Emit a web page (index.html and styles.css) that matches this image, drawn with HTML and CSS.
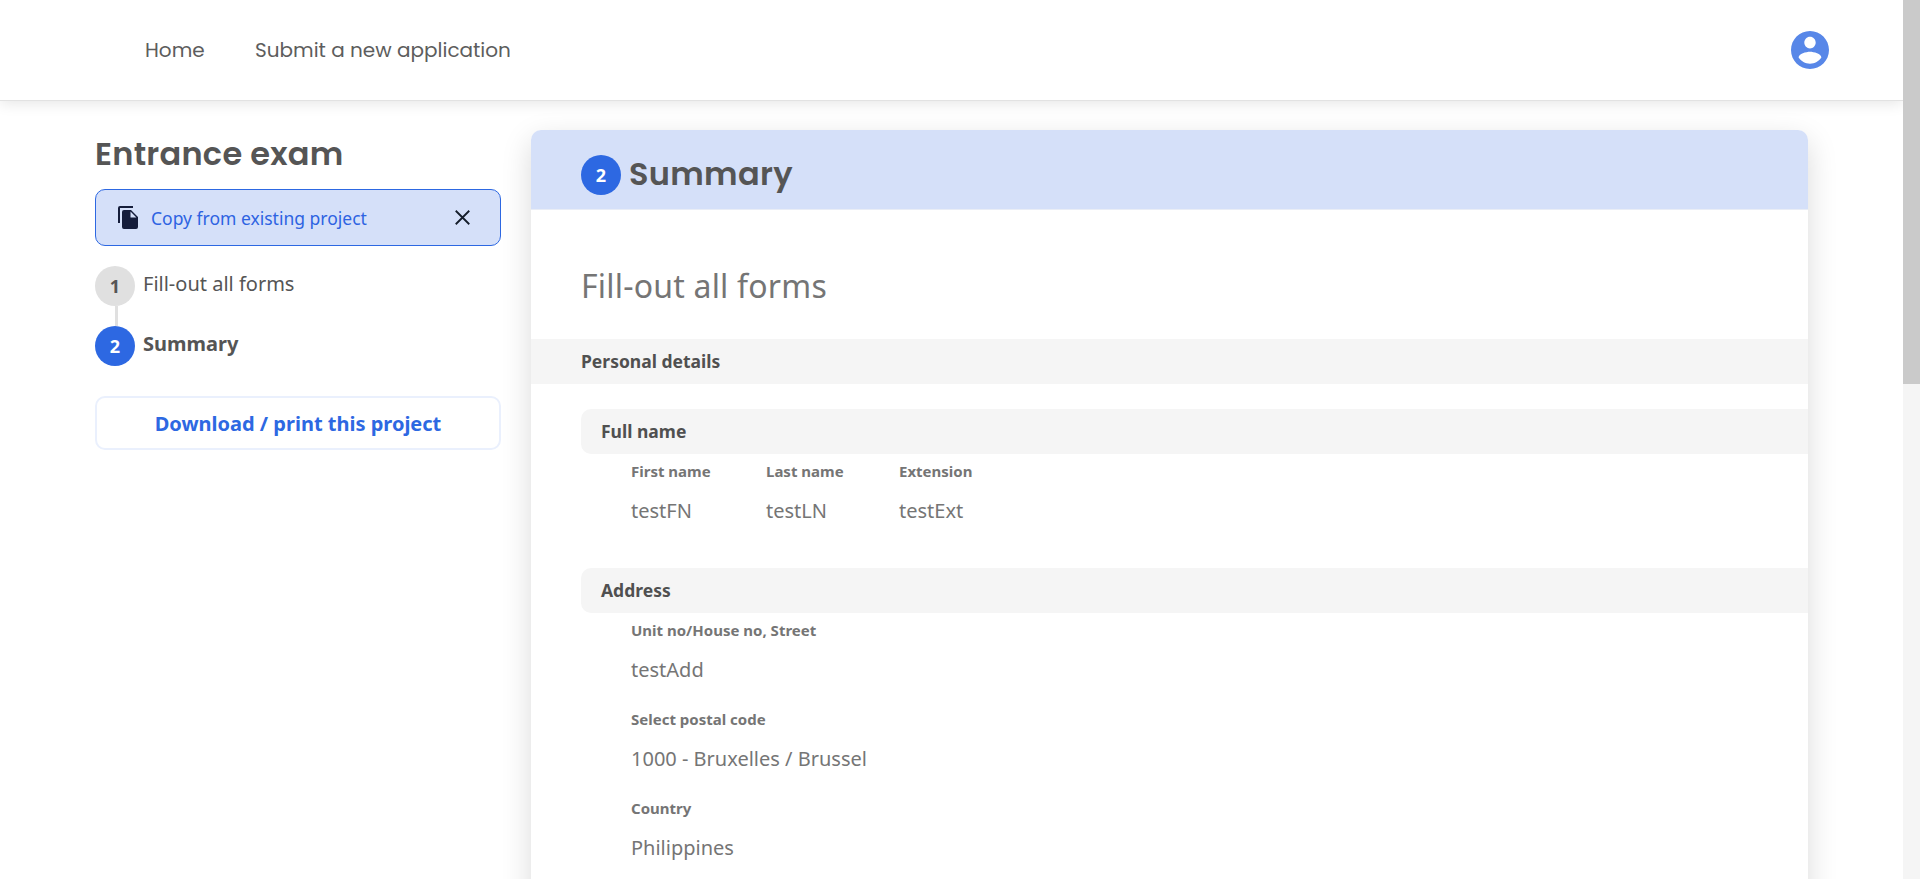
FILE: index.html
```html
<!DOCTYPE html>
<html lang="en">
<head>
<meta charset="utf-8">
<title>Entrance exam</title>
<link rel="stylesheet" href="styles.css">
</head>
<body>
<div class="window">
  <div class="page">
    <header class="topbar">
      <nav class="nav">
        <a class="nav-home">Home</a>
        <a class="nav-submit">Submit a new application</a>
      </nav>
      <svg class="avatar" viewBox="2 2 20 20"><path fill="#5887e8" fill-rule="evenodd" d="M12 2C6.48 2 2 6.48 2 12s4.480 10 10 10 10-4.480 10-10S17.520 2 12 2zm0 3c1.660 0 3 1.340 3 3.100s-1.340 3.100-3 3.100-3-1.440-3-3.100S10.340 5 12 5zm0 14.200c-2.500 0-4.710-1.280-6-3.220.030-1.990 4-3.080 6-3.080s5.970 1.090 6 3.080c-1.290 1.940-3.500 3.220-6 3.220z"/></svg>
    </header>
    <div class="content">
      <aside class="sidebar">
        <h1 class="project-title">Entrance exam</h1>
        <div class="copy-box">
          <svg class="copy-icon" viewBox="0 0 20 23"><path fill="#151d3b" d="M0 17V2Q0 0 2 0h13v2H2v15zM6 4h7l7 7v10q0 2-2 2H6q-2 0-2-2V6q0-2 2-2zm6.500 1.600V11.500h5.900z"/></svg>
          <span class="copy-label">Copy from existing project</span>
          <svg class="close-icon" viewBox="0 0 14 14"><path d="M.7.700l12.600 12.600M13.300.700L.7 13.300" stroke="#151d2b" stroke-width="1.700"/></svg>
        </div>
        <div class="step"><span class="badge badge-muted">1</span><span class="step-name">Fill-out all forms</span></div>
        <div class="connector"></div>
        <div class="step"><span class="badge">2</span><span class="step-name step-current">Summary</span></div>
        <button class="download">Download / print this project</button>
      </aside>
      <main class="panel">
        <div class="panel-head"><span class="badge">2</span><h2 class="panel-title">Summary</h2></div>
        <h3 class="form-title">Fill-out all forms</h3>
        <div class="band">Personal details</div>
        <section class="group">
          <div class="band band-inner">Full name</div>
          <div class="fields fields-row">
            <div class="field"><div class="label">First name</div><div class="value">testFN</div></div>
            <div class="field"><div class="label">Last name</div><div class="value">testLN</div></div>
            <div class="field"><div class="label">Extension</div><div class="value">testExt</div></div>
          </div>
        </section>
        <section class="group group-next">
          <div class="band band-inner">Address</div>
          <div class="fields">
            <div class="field"><div class="label">Unit no/House no, Street</div><div class="value">testAdd</div></div>
            <div class="field"><div class="label">Select postal code</div><div class="value">1000 - Bruxelles / Brussel</div></div>
            <div class="field"><div class="label">Country</div><div class="value">Philippines</div></div>
          </div>
        </section>
      </main>
    </div>
  </div>
  <div class="scrollbar"><div class="thumb"></div></div>
</div>
</body>
</html>
```
FILE: styles.css
```css
* { box-sizing: border-box; }
body { margin: 0; font-family: "Noto Sans", sans-serif; color: #555; background: #fff; overflow: hidden; }
h1, h2, h3 { margin: 0; }
.window { display: flex; height: 879px; overflow: hidden; }
.page { width: 1903px; height: 879px; overflow: hidden; background: #fff; }
.topbar { height: 101px; display: flex; align-items: center; justify-content: space-between; padding: 0 74px 0 145px; border-bottom: 1px solid #e2e2e2; box-shadow: 0 2px 14px rgba(0,0,0,.11); }
.nav { display: flex; gap: 50px; font-family: Poppins, Inter, sans-serif; font-size: 20px; color: #5d5d5d; line-height: 30px; }
.nav-home { width: 60px; white-space: nowrap; }
.nav-submit { white-space: nowrap; }
.avatar { width: 38px; height: 38px; }
.content { display: flex; gap: 30px; padding: 29px 95px 0; align-items: flex-start; }
.sidebar { width: 406px; flex: none; }
.project-title { height: 59px; padding-top: 1px; font-family: Poppins, Inter, sans-serif; font-size: 32px; line-height: 46px; font-weight: 600; letter-spacing: .25px; white-space: nowrap; }
.copy-box { height: 57px; display: flex; align-items: center; padding: 0 30px 0 22px; border: 1px solid #2d68e2; border-radius: 10px; background: #d5e0f9; margin-bottom: 20px; }
.copy-icon { width: 20px; height: 23px; margin-right: 13px; }
.copy-label { flex: 1; font-size: 17.5px; font-weight: 400; color: #2d63e2; }
.close-icon { width: 15px; height: 15px; }
.step { display: flex; gap: 8px; height: 40px; }
.badge { flex: none; width: 40px; height: 40px; border-radius: 50%; background: #2d68e2; color: #fff; font-size: 18px; line-height: 40px; font-weight: 700; text-align: center; }
.badge-muted { background: #e0e0e0; color: #555; }
.step-name { font-size: 20px; line-height: 36px; }
.step-current { font-weight: 700; }
.connector { width: 3px; height: 20px; margin-left: 20px; background: #e0e0e0; }
.download { display: block; width: 406px; height: 54px; margin-top: 30px; padding: 0; border: 2px solid #eaf0fd; border-radius: 10px; background: #fff; color: #2d68e2; font-family: "Noto Sans", sans-serif; font-size: 20px; font-weight: 700; }
.panel { width: 1277px; flex: none; height: 1000px; border-radius: 10px; background: #fff; box-shadow: 0 10px 30px rgba(0,0,0,.15); overflow: hidden; }
.panel-head { display: flex; gap: 8px; height: 80px; padding: 25px 50px 0; background: #d5e0f9; border-bottom: 1px solid #e9edf6; }
.panel-title { font-family: Poppins, Inter, sans-serif; font-size: 32px; line-height: 38px; font-weight: 600; letter-spacing: .3px; }
.form-title { height: 129px; padding: 52px 50px 0; font-size: 32px; line-height: 48px; font-weight: 400; letter-spacing: .2px; color: #757575; }
.band { height: 45px; padding-left: 50px; background: #f5f5f5; color: #505050; font-size: 17.5px; line-height: 45px; font-weight: 700; }
.group { margin: 25px 0 0 50px; }
.group-next { margin-top: 42px; }
.band-inner { padding-left: 20px; border-radius: 10px 0 0 10px; }
.fields { display: flex; flex-direction: column; gap: 22px; padding: 5px 0 0 50px; color: #757575; }
.fields-row { display: grid; grid-template-columns: 135px 133px 135px; gap: 0; }
.label { height: 24px; margin-bottom: 13px; font-size: 15px; line-height: 24px; font-weight: 700; white-space: nowrap; }
.value { font-size: 20px; line-height: 30px; white-space: nowrap; }
.scrollbar { width: 17px; background: #f5f5f5; }
.thumb { height: 384px; background: #cacaca; }
```
